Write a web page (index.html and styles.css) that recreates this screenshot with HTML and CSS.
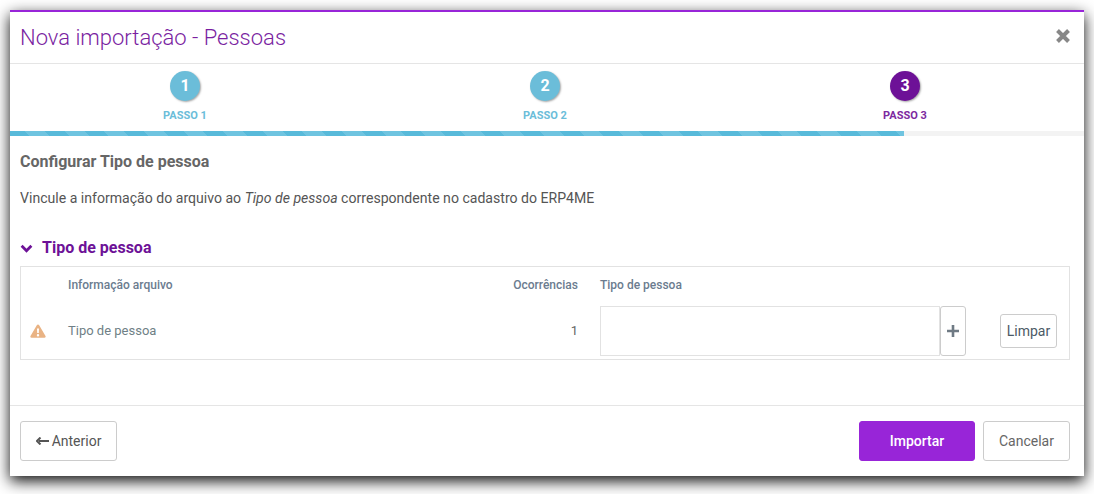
FILE: index.html
```html
<!DOCTYPE html>
<html lang="pt-BR">
<head>
<meta charset="utf-8">
<title>Nova importação - Pessoas</title>
<link rel="stylesheet" href="styles.css">
</head>
<body>
<div class="modal">
  <header class="modal-header">
    <h1 class="modal-title">Nova importação - Pessoas</h1>
    <svg class="close" viewBox="0 0 16 16" width="16" height="16" aria-label="Fechar"><path d="M2.5 2.5 13.5 13.5M13.500 2.500 2.500 13.500" stroke="#888" stroke-width="4" fill="none"/></svg>
  </header>
  <nav class="steps">
    <div class="step done"><span class="bullet">1</span><span class="step-label">PASSO 1</span></div>
    <div class="step done"><span class="bullet">2</span><span class="step-label">PASSO 2</span></div>
    <div class="step active"><span class="bullet">3</span><span class="step-label">PASSO 3</span></div>
  </nav>
  <div class="progress"><div class="progress-bar"></div></div>
  <main class="modal-body">
    <h2 class="section-title">Configurar Tipo de pessoa</h2>
    <p class="intro">Vincule a informação do arquivo ao <em>Tipo de pessoa</em> correspondente no cadastro do ERP4ME</p>
    <h3 class="group-title">
      <svg class="chevron" viewBox="0 0 12 8" width="12" height="8"><path d="M1.500 1.500 6 6 10.500 1.500" stroke="#6d1197" stroke-width="2.600" fill="none"/></svg>
      Tipo de pessoa
    </h3>
    <div class="table">
      <div class="thead">
        <span class="col-icon"></span>
        <span class="col-info">Informação arquivo</span>
        <span class="col-count">Ocorrências</span>
        <span class="col-type">Tipo de pessoa</span>
      </div>
      <div class="trow">
        <span class="col-icon">
          <svg viewBox="0 0 16 14" width="16" height="14"><path fill-rule="evenodd" d="M8 .5c.5 0 .9.300 1.200.800l6.300 10.800c.5.800-.1 1.700-1 1.700H1.500c-.9 0-1.500-.9-1-1.700L6.800 1.300C7.100.8 7.500.5 8 .5ZM7 4.500l.2 4.500h1.600L9 4.500H7Zm1 5.500a1.200 1.200 0 1 0 0 2.400A1.200 1.200 0 0 0 8 10Z" fill="#e9b384"/></svg>
        </span>
        <span class="col-info">Tipo de pessoa</span>
        <span class="col-count">1</span>
        <span class="col-type">
          <span class="select"></span>
          <button class="add" type="button" aria-label="Adicionar"><svg viewBox="0 0 12 12" width="12" height="12"><path d="M6 0v12M0 6h12" stroke="#6f7a84" stroke-width="2.600"/></svg></button>
        </span>
        <span class="col-clear"><button class="btn btn-clear" type="button">Limpar</button></span>
      </div>
    </div>
  </main>
  <footer class="modal-footer">
    <button class="btn btn-prev" type="button"><svg viewBox="0 0 13 8" width="13" height="8"><path d="M13 4H3M4.500 .5 1 4l3.500 3.500" stroke="#555" stroke-width="2" fill="none"/></svg> Anterior</button>
    <div class="footer-right">
      <button class="btn btn-primary" type="button">Importar</button>
      <button class="btn btn-cancel" type="button">Cancelar</button>
    </div>
  </footer>
</div>
</body>
</html>
```
FILE: styles.css
```css
* { box-sizing: border-box; }
html, body { height: 100%; }
body {
  margin: 0;
  padding: 10px 10px 0;
  background: #fff;
  font-family: Roboto, "Liberation Sans", sans-serif;
  color: #666;
  overflow: hidden;
}
.modal {
  height: 466px;
  background: #fff;
  border-top: 2px solid #9825d8;
  box-shadow: 0 5px 14px rgba(0,0,0,.95);
  display: flex;
  flex-direction: column;
}
.modal-header {
  height: 52px;
  flex: none;
  padding: 0 13px 0 10px;
  border-bottom: 1px solid #e5e5e5;
  display: flex;
  align-items: center;
  justify-content: space-between;
}
.modal-title {
  margin: 0;
  font-size: 22px;
  font-weight: 300;
  color: #7a1ea1;
  line-height: 50px;
}
.close { display: block; margin-bottom: 4px; }
.steps {
  height: 67px;
  flex: none;
  margin: 0 -1px 0 -5px;
  display: grid;
  grid-template-columns: repeat(3, 1fr);
}
.step {
  display: flex;
  flex-direction: column;
  align-items: center;
  padding-top: 7px;
}
.bullet {
  width: 30px;
  height: 30px;
  border-radius: 50%;
  color: #fff;
  font-weight: 700;
  font-size: 16px;
  line-height: 30px;
  text-align: center;
  box-shadow: 1px 1px 2px rgba(0,0,0,.35);
}
.done .bullet { background: #6bbdd9; }
.active .bullet { background: #6d1197; }
.step-label {
  margin-top: 7px;
  font-size: 11px;
  font-weight: 700;
  line-height: 16px;
}
.done .step-label { color: #6bbdd9; }
.active .step-label { color: #7d2a9f; }
.progress {
  height: 5px;
  flex: none;
  background: #f3f3f3;
}
.progress-bar {
  width: 894px;
  height: 100%;
  background: repeating-linear-gradient(45deg, #58bada 0 14px, #6fc4e0 14px 28px);
}
.modal-body {
  flex: 1;
  padding: 16px 14px 0 10px;
  min-height: 0;
}
.section-title {
  margin: 0;
  font-size: 16px;
  font-weight: 700;
  line-height: 20px;
  color: #666;
}
.intro {
  margin: 16px 0 0;
  font-size: 14.080px;
  line-height: 20px;
  color: #555;
}
.group-title {
  margin: 30px 0 0;
  display: flex;
  align-items: center;
  gap: 9px;
  font-size: 16px;
  font-weight: 700;
  line-height: 20px;
  color: #6d1197;
}
.chevron { width: 13px; height: 9px; }
.table {
  margin-top: 8px;
  height: 94px;
  border: 1px solid #e2e2e2;
}
.thead, .trow {
  display: grid;
  grid-template-columns: 47px 410px 100px 388px 1fr;
  align-items: center;
}
.thead {
  height: 35px;
  font-size: 12px;
  font-weight: 500;
  color: #6b7c8f;
}
.trow {
  height: 57px;
  font-size: 13px;
  color: #6f7f86;
}
.col-icon { padding-left: 9px; display: flex; align-items: center; }
.col-count { text-align: right; color: #666; }
.thead .col-count { color: #6b7c8f; }
.col-type { padding-left: 22px; display: flex; align-items: center; }
.select {
  width: 340px;
  height: 50px;
  border: 1px solid #e2e2e2;
  background: #fff;
}
.add {
  width: 26px;
  height: 50px;
  padding: 0;
  background: #fff;
  border: 1px solid #ccc;
  border-radius: 3px;
  display: flex;
  align-items: center;
  justify-content: center;
}
.col-clear { display: flex; padding-left: 34px; }
.btn {
  font-family: inherit;
  font-size: 14px;
  background: #fff;
  border: 1px solid #ccc;
  border-radius: 3px;
  color: #555;
  padding: 0;
}
.btn-clear {
  width: 57px;
  height: 34px;
  color: #4c5a66;
}
.modal-footer {
  height: 71px;
  flex: none;
  padding: 15px 14px 0 10px;
  border-top: 1px solid #e5e5e5;
  display: flex;
  justify-content: space-between;
  align-items: flex-start;
}
.btn-prev {
  width: 97px;
  height: 40px;
  display: flex;
  align-items: center;
  justify-content: center;
  gap: 3px;
}
.footer-right { display: flex; gap: 8px; }
.btn-primary {
  width: 116px;
  height: 40px;
  background: #9825d8;
  border-color: #9825d8;
  color: #fff;
  font-weight: 500;
}
.btn-cancel {
  width: 87px;
  height: 40px;
  color: #666;
}
```
